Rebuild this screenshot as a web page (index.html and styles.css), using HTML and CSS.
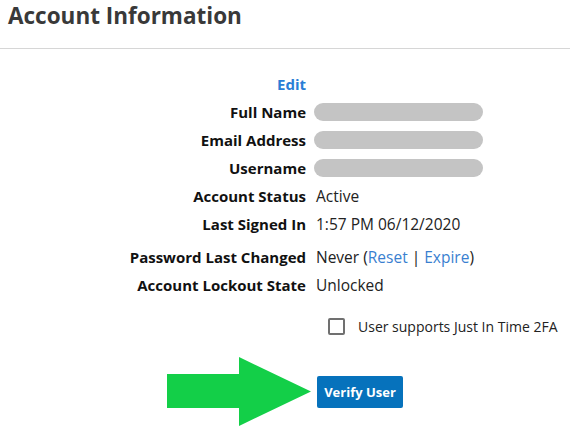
FILE: index.html
```html
<!DOCTYPE html>
<html>
<head>
<meta charset="utf-8">
<link rel="stylesheet" href="styles.css">
</head>
<body>
<header class="page-head">
  <h1 class="title">Account Information</h1>
</header>
<main class="info">
  <div class="row"><div class="label"><a class="edit" href="#">Edit</a></div><div class="value"></div></div>
  <div class="row"><div class="label">Full Name</div><div class="value"><span class="redact"></span></div></div>
  <div class="row"><div class="label">Email Address</div><div class="value"><span class="redact"></span></div></div>
  <div class="row"><div class="label">Username</div><div class="value"><span class="redact"></span></div></div>
  <div class="row"><div class="label">Account Status</div><div class="value">Active</div></div>
  <div class="row"><div class="label">Last Signed In</div><div class="value">1:57 PM 06/12/2020</div></div>
  <div class="row row-gap"><div class="label">Password Last Changed</div><div class="value">Never (<a class="link" href="#">Reset</a> | <a class="link" href="#">Expire</a>)</div></div>
  <div class="row"><div class="label">Account Lockout State</div><div class="value">Unlocked</div></div>
  <div class="row row-check"><div class="label"></div><div class="value"><label class="check"><span class="box"></span><span class="check-text">User supports Just In Time 2FA</span></label></div></div>
  <div class="row row-action">
    <div class="label arrow-cell">
      <svg class="arrow" width="144" height="70" viewBox="0 0 144 70"><polygon points="0,17 72,17 72,0 144,34.5 72,69 72,51 0,51" fill="#13cf48"/></svg>
    </div>
    <div class="value"><button class="btn">Verify User</button></div>
  </div>
</main>
</body>
</html>
```
FILE: styles.css
```css
html, body { margin: 0; padding: 0; background: #fff; }
body { font-family: "Open Sans", "Noto Sans", sans-serif; color: #161616; }
.page-head { border-bottom: 1px solid #d6d6d6; padding: 0 8px; height: 49px; box-sizing: border-box; }
.title { margin: 0; padding-top: 0; font-size: 22.5px; line-height: 32px; font-weight: 700; color: #393939; }
.info { padding-top: 21px; }
.row { display: grid; grid-template-columns: 306px 1fr; column-gap: 10px; height: 28px; align-items: center; }
.row-gap { margin-top: 5px; }
.label { text-align: right; font-weight: 700; font-size: 15px; color: #111; }
.value { font-size: 15.5px; color: #222; display: flex; align-items: center; white-space: pre; }
.edit { color: #2a7ed6; text-decoration: none; font-weight: 700; }
.link { color: #3a7fd0; text-decoration: none; }
.redact { display: block; width: 169px; height: 18px; border-radius: 9px; background: #c4c4c4; margin-left: -2px; }
.row-check { height: 40px; margin-top: 7px; }
.check { display: flex; align-items: center; margin-left: 12px; }
.box { width: 17px; height: 17px; box-sizing: border-box; border: 2px solid #707070; border-radius: 2px; }
.check-text { margin-left: 13px; font-size: 14px; color: #222; }
.row-action { height: 70px; margin-top: 11px; }
.arrow-cell { display: flex; justify-content: flex-end; margin-right: -5px; }
.arrow { display: block; }
.btn { width: 86px; height: 32px; background: #0672bc; color: #fff; border: 0; border-radius: 2px; font-family: inherit; font-weight: 700; font-size: 13px; padding: 0; margin-left: 1px; }
```
